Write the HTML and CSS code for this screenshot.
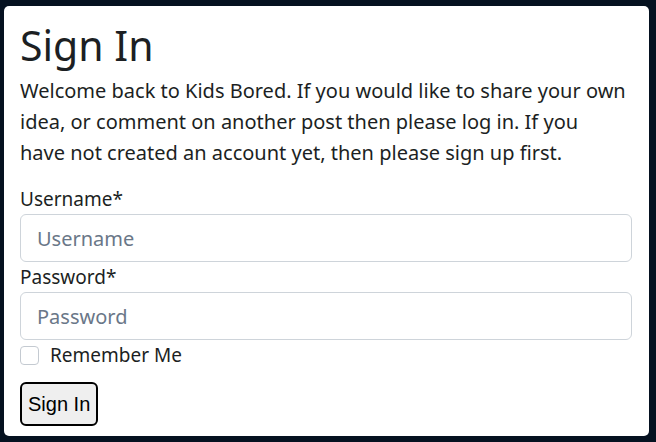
FILE: index.html
```html
<!DOCTYPE html>
<html lang="en">
<head>
<meta charset="utf-8">
<title>Sign In</title>
<link rel="stylesheet" href="styles.css">
</head>
<body>
<main class="card">
  <h1 class="title">Sign In</h1>
  <p class="intro">Welcome back to Kids Bored. If you would like to share your own<br>idea, or comment on another post then please log in. If you<br>have not created an account yet, then please sign up first.</p>
  <form class="login-form">
    <label class="field-label" for="username">Username*</label>
    <input class="field-input" id="username" type="text" placeholder="Username">
    <label class="field-label" for="password">Password*</label>
    <input class="field-input" id="password" type="password" placeholder="Password">
    <div class="check-row">
      <input class="check-box" id="remember" type="checkbox">
      <label class="check-label" for="remember">Remember Me</label>
    </div>
    <div class="actions">
      <button class="submit-btn" type="submit">Sign In</button>
    </div>
  </form>
</main>
</body>
</html>
```
FILE: styles.css
```css
* { box-sizing: border-box; }
html, body { margin: 0; padding: 0; }
body {
  background: #051120;
  padding: 6px 7px 6px 4px;
  font-family: "Noto Sans", "Open Sans", sans-serif;
  color: #1c1f23;
}
.card {
  background: #fff;
  border-radius: 5px;
  padding: 13px 17px 8px 16px;
  height: 430px;
}
.title {
  margin: 0 0 4px;
  font-size: 41px;
  font-weight: 400;
  line-height: 52px;
}
.intro {
  margin: 0 0 16px;
  font-size: 20px;
  line-height: 31px;
  white-space: nowrap;
}
.login-form {
  display: flex;
  flex-direction: column;
}
.field-label {
  font-size: 19px;
  line-height: 30px;
}
.field-input {
  height: 48px;
  border: 1px solid #ced4da;
  border-radius: 6px;
  padding: 8px 16px;
  font: inherit;
  font-size: 20px;
  color: #212529;
  background: #fff;
}
.field-input::placeholder { color: #6a7788; }
.check-row {
  display: flex;
  align-items: center;
  gap: 11px;
  height: 30px;
}
.check-box {
  appearance: none;
  margin: 0;
  width: 19px;
  height: 19px;
  border: 1px solid #c4cad1;
  border-radius: 4px;
  background: #fff;
}
.check-label {
  font-size: 19px;
  line-height: 30px;
}
.actions {
  margin-top: 12px;
}
.submit-btn {
  font-family: "Liberation Sans", Arial, sans-serif;
  font-size: 20px;
  line-height: 30px;
  padding: 5px 6px;
  background: #efefef;
  color: #000;
  border: 2px solid #000;
  border-radius: 6px;
}
```
